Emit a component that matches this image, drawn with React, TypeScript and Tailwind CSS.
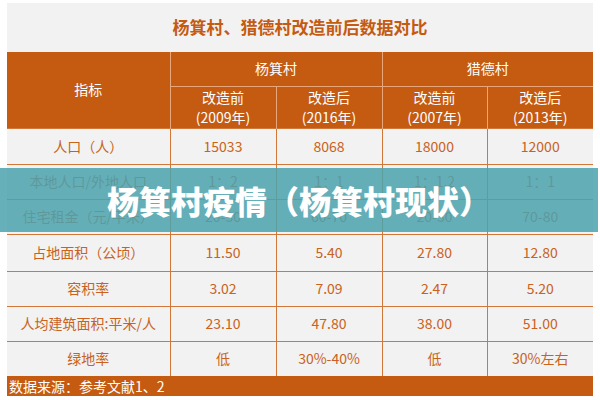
import React from "react";

const font = { fontFamily: '"Noto Sans CJK SC", "Noto Sans", sans-serif' };

const rows: string[][] = [
  ["人口（人）", "15033", "8068", "18000", "12000"],
  ["本地人口/外地人口", "1：2", "1：1", "1：1.2", "1：1"],
  ["住宅租金（元/平米）", "20-30", "60-70", "20-30", "70-80"],
  ["占地面积（公顷）", "11.50", "5.40", "27.80", "12.80"],
  ["容积率", "3.02", "7.09", "2.47", "5.20"],
  ["人均建筑面积:平米/人", "23.10", "47.80", "38.00", "51.00"],
  ["绿地率", "低", "30%-40%", "低", "30%左右"],
];

const rowH = ["h-[36px]", "h-[35px]", "h-[35px]", "h-[37px]", "h-[35px]", "h-[35px]", "h-[35px]"];

export default function App() {
  return (
    <div className="w-[600px] h-[400px] bg-white relative overflow-hidden" style={font}>
      <div className="ml-[7px] mt-[3px] w-[586px] bg-[#f2f2f2]">
        <div className="h-[49px] flex items-center justify-center pb-[2px]">
          <span className="text-[17px] font-bold text-[#c55a11] tracking-[0px]">杨箕村、猎德村改造前后数据对比</span>
        </div>
        <table className="w-[586px] border-collapse table-fixed text-[14px]">
          <colgroup>
            <col className="w-[163px]" />
            <col className="w-[106px]" />
            <col className="w-[106px]" />
            <col className="w-[105px]" />
            <col className="w-[106px]" />
          </colgroup>
          <thead>
            <tr className="h-[34px] bg-[#c55a11] text-white">
              <th rowSpan={2} className="font-normal border-r border-[#e8a67a]">指标</th>
              <th colSpan={2} className="font-normal border-r border-b border-[#e8a67a]">杨箕村</th>
              <th colSpan={2} className="font-normal border-b border-[#e8a67a]">猎德村</th>
            </tr>
            <tr className="h-[42px] bg-[#c55a11] text-white leading-[20px]">
              <th className="font-normal border-r border-[#e8a67a]">改造前<br />(2009年)</th>
              <th className="font-normal border-r border-[#e8a67a]">改造后<br />(2016年)</th>
              <th className="font-normal border-r border-[#e8a67a]">改造前<br />(2007年)</th>
              <th className="font-normal">改造后<br />(2013年)</th>
            </tr>
          </thead>
          <tbody className="text-[#c8621c]">
            {rows.map((r, i) => (
              <tr key={i} className={`${rowH[i]} border-t border-[#d2773a]`}>
                {r.map((c, j) => (
                  <td key={j} className={`text-center p-0 ${j < 4 ? "border-r border-[#d2773a]" : ""}`}>{c}</td>
                ))}
              </tr>
            ))}
          </tbody>
        </table>
        <div className="h-[20px] bg-[#c55a11] text-white text-[14px] leading-[20px] pl-[2px]">数据来源：参考文献1、2</div>
      </div>
      <div className="absolute left-0 top-[168px] w-[598px] h-[64px] bg-[rgba(75,162,174,0.85)] flex items-center justify-center">
        <span className="text-white text-[32px] font-bold leading-none" style={{ fontFamily: '"Noto Sans CJK SC", sans-serif', fontWeight: 900 }}>杨箕村疫情（杨箕村现状）</span>
      </div>
    </div>
  );
}
